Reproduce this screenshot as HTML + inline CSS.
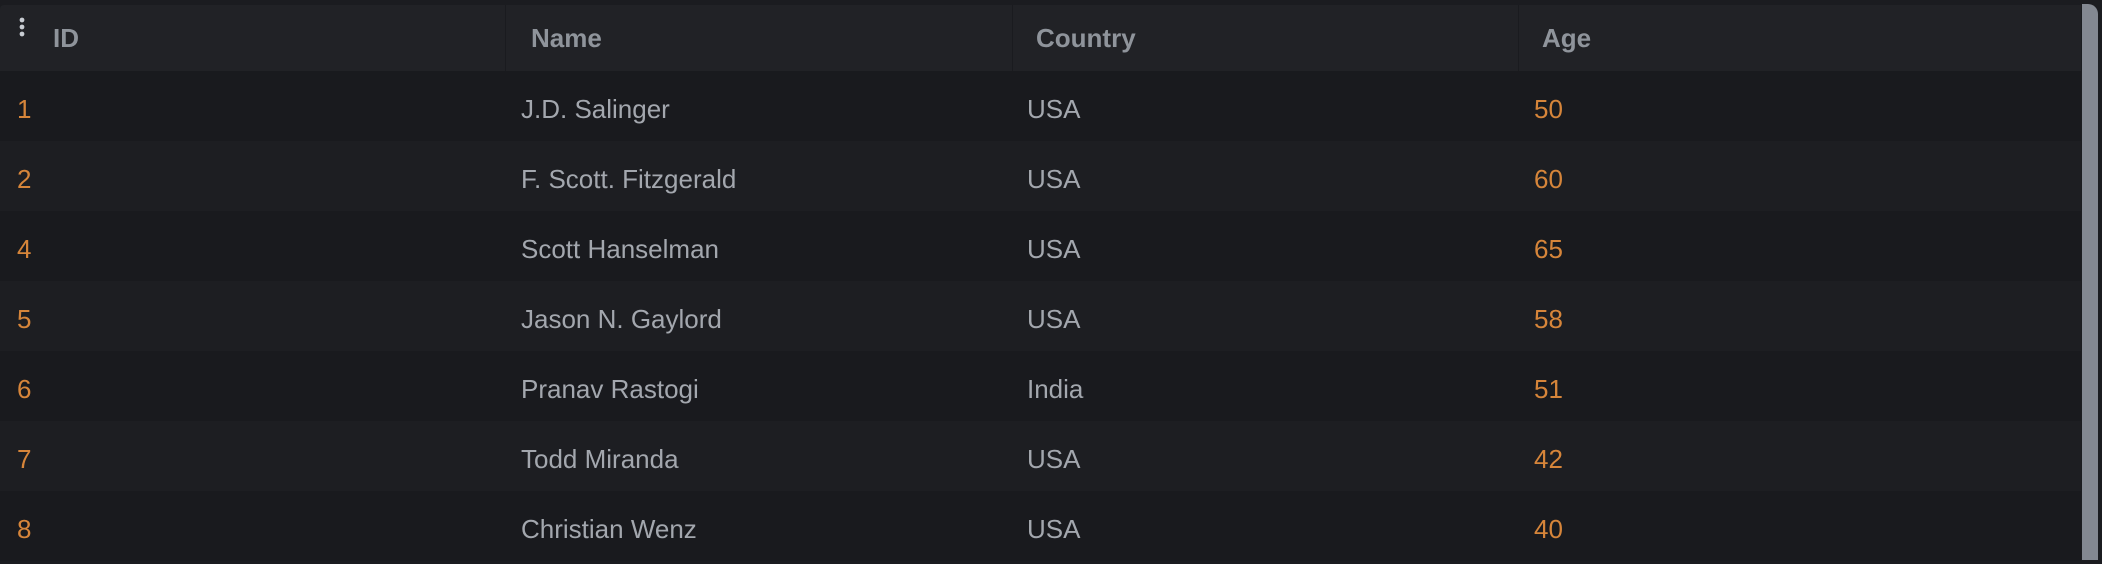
<!DOCTYPE html>
<html><head><style>
html,body{margin:0;padding:0;background:#1b1c20;width:2102px;height:560px;overflow:hidden;font-family:"Liberation Sans",sans-serif}
.t{position:absolute;left:0;top:5px;width:2081px;}
.h{position:absolute;left:0;top:0;width:2081px;height:66px;background:#212226;border-top-left-radius:4px}
.r{position:absolute;left:0;width:2081px;height:70px}
.c{position:absolute;top:0;height:100%;display:flex;align-items:center;font-size:26px;color:#a3a7ae}
.r .c{top:3px}
.h .c{font-weight:bold;color:#8f949b}
.o{color:#d6853a}
.b{position:absolute;top:0;width:1px;height:66px;background:#1a1b1f}
.sb{position:absolute;left:2082px;top:4px;width:16px;height:556px;background:#838891;border-top-right-radius:10px}
</style></head><body>
<div class="t">
<div class="h">
<svg style="position:absolute;left:19px;top:12px" width="6" height="20"><circle cx="3" cy="3" r="2.4" fill="#c8ccd2"/><circle cx="3" cy="10" r="2.4" fill="#c8ccd2"/><circle cx="3" cy="17" r="2.4" fill="#c8ccd2"/></svg>
<div class="c" style="left:53px">ID</div>
<div class="b" style="left:505px"></div><div class="c" style="left:531px">Name</div>
<div class="b" style="left:1012px"></div><div class="c" style="left:1036px">Country</div>
<div class="b" style="left:1518px"></div><div class="c" style="left:1542px">Age</div>
</div>
<div class="r" style="top:66px;background:#191a1e"><div class="c o" style="left:17px">1</div><div class="c" style="left:521px">J.D. Salinger</div><div class="c" style="left:1027px">USA</div><div class="c o" style="left:1534px">50</div></div>
<div class="r" style="top:136px;background:#1d1e22"><div class="c o" style="left:17px">2</div><div class="c" style="left:521px">F. Scott. Fitzgerald</div><div class="c" style="left:1027px">USA</div><div class="c o" style="left:1534px">60</div></div>
<div class="r" style="top:206px;background:#191a1e"><div class="c o" style="left:17px">4</div><div class="c" style="left:521px">Scott Hanselman</div><div class="c" style="left:1027px">USA</div><div class="c o" style="left:1534px">65</div></div>
<div class="r" style="top:276px;background:#1d1e22"><div class="c o" style="left:17px">5</div><div class="c" style="left:521px">Jason N. Gaylord</div><div class="c" style="left:1027px">USA</div><div class="c o" style="left:1534px">58</div></div>
<div class="r" style="top:346px;background:#191a1e"><div class="c o" style="left:17px">6</div><div class="c" style="left:521px">Pranav Rastogi</div><div class="c" style="left:1027px">India</div><div class="c o" style="left:1534px">51</div></div>
<div class="r" style="top:416px;background:#1d1e22"><div class="c o" style="left:17px">7</div><div class="c" style="left:521px">Todd Miranda</div><div class="c" style="left:1027px">USA</div><div class="c o" style="left:1534px">42</div></div>
<div class="r" style="top:486px;background:#191a1e"><div class="c o" style="left:17px">8</div><div class="c" style="left:521px">Christian Wenz</div><div class="c" style="left:1027px">USA</div><div class="c o" style="left:1534px">40</div></div>
</div>
<div class="sb"></div>
</body></html>
